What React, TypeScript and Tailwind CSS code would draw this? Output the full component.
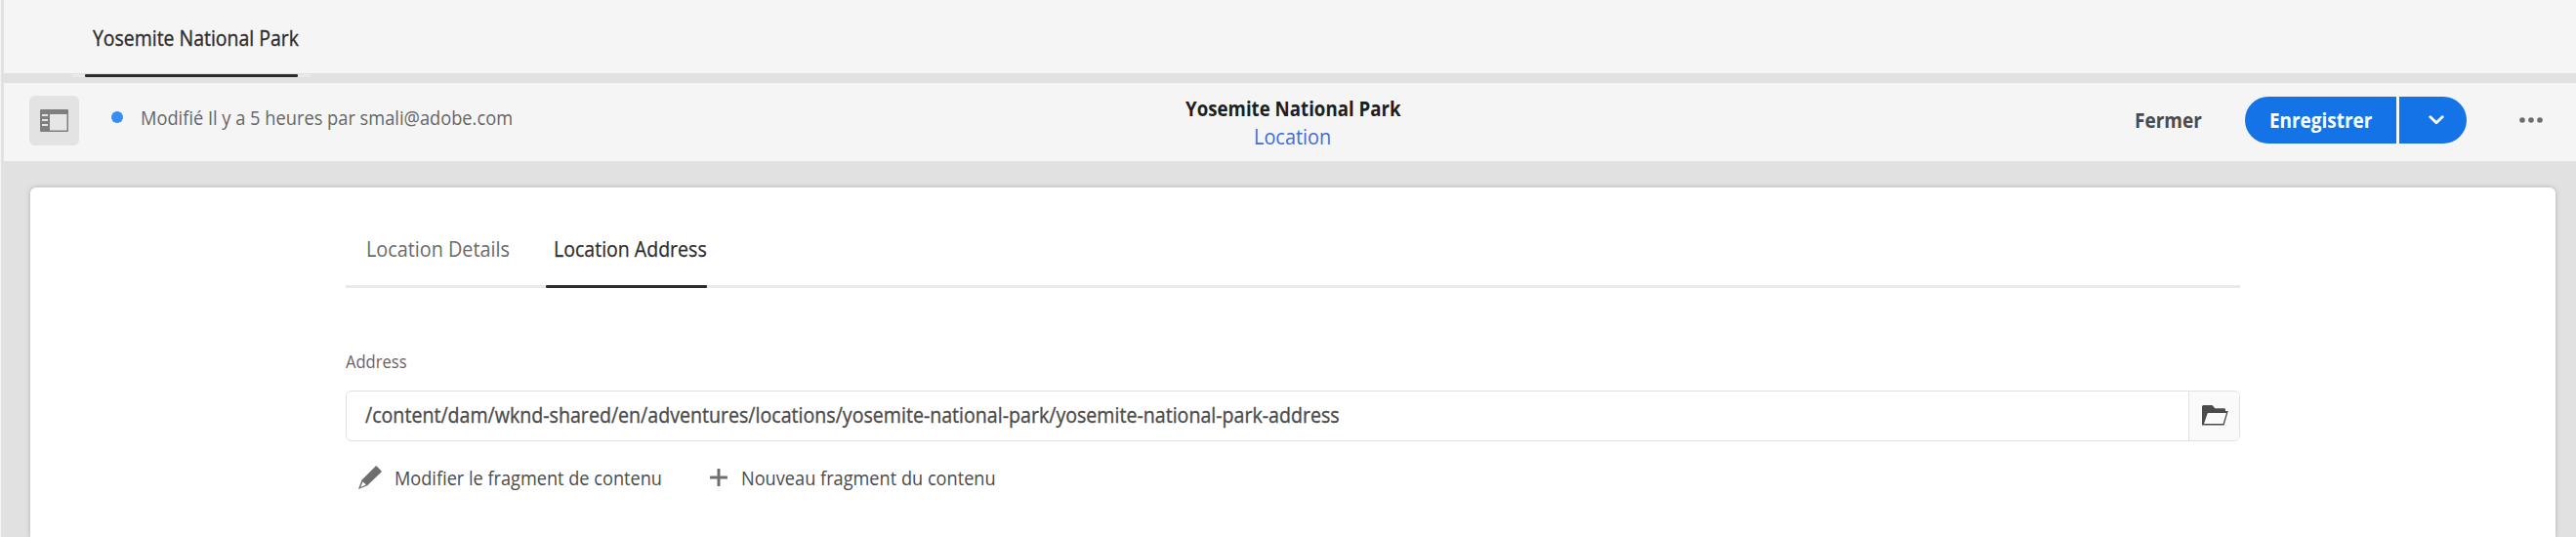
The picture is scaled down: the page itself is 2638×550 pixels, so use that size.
import type { ReactNode } from "react";

function Label({ box, text, children }: { box: string; text: string; children: ReactNode }) {
  return (
    <span className={`block shrink-0 whitespace-nowrap ${box}`}>
      <span className={`inline-block origin-left ${text}`}>{children}</span>
    </span>
  );
}

function RailIcon() {
  return (
    <svg width="29" height="23" viewBox="0 0 29 23" className="block">
      <rect x="0" y="0" width="29" height="23" rx="1" fill="#7f7f7f" />
      <rect x="10" y="5" width="17.5" height="16.5" fill="#e6e6e6" />
      <path d="M2 6h6M2 11h6M2 16h6" stroke="#e3e3e3" strokeWidth="1.8" />
    </svg>
  );
}

function FolderIcon() {
  return (
    <svg width="27" height="21" viewBox="0 0 27 21" className="block">
      <path d="M0 20.5V1.5Q0 0 1.5 0H10.5L13.3 3.2H23Q24 3.2 24 4.2V6H26.8L22.6 20.5Z" fill="#4b4b4b" />
      <path d="M5.8 8H25L21.6 19H2Z" fill="#fafafa" />
    </svg>
  );
}

function PencilIcon() {
  return (
    <svg width="24" height="24" viewBox="0 0 24 24" className="block">
      <path d="M17.6 0.5Q18.2 0 18.8 0.5L23.5 5.2Q24 5.8 23.5 6.4L9.2 20.3L0.8 23.8Q0 24 0.2 23.2L3.6 14.6Z" fill="#6e6e6e" />
      <path d="M4.6 16.3L7.8 19.6L2.2 22Z" fill="#fff" />
    </svg>
  );
}

function PlusIcon() {
  return (
    <svg width="18" height="18" viewBox="0 0 18 18" className="block">
      <path d="M9 1V17M1 9H17" stroke="#6e6e6e" strokeWidth="3" strokeLinecap="round" />
    </svg>
  );
}

function ChevronIcon() {
  return (
    <svg width="16" height="10" viewBox="0 0 16 10" className="block">
      <path d="M1.8 1.8L8 7.8L14.2 1.8" fill="none" stroke="#fff" strokeWidth="2.8" strokeLinecap="round" strokeLinejoin="round" />
    </svg>
  );
}

function MoreIcon() {
  return (
    <svg width="24" height="6" viewBox="0 0 24 6" className="block">
      <circle cx="3" cy="3" r="2.8" fill="#6e6e6e" />
      <circle cx="12" cy="3" r="2.8" fill="#6e6e6e" />
      <circle cx="21" cy="3" r="2.8" fill="#6e6e6e" />
    </svg>
  );
}

function FragmentTabs() {
  return (
    <header className="flex h-[85px] flex-col">
      <div className="h-[75px] bg-[#f5f5f5] pl-[91px] pt-[23px]">
        <Label box="w-[211px]" text="text-[22px] leading-[30px] text-[#2c2c2c] [-webkit-text-stroke:0.35px] scale-x-[0.884]">
          Yosemite National Park
        </Label>
      </div>
      <div className="ml-[70px] mt-px flex h-[3px] w-[244px] bg-[#eaeaea] pl-[13px]">
        <div className="w-[218px] rounded-[1px] bg-[#2c2c2c]" />
      </div>
    </header>
  );
}

function Toolbar() {
  return (
    <div className="grid h-[80px] grid-cols-[1fr_240px_1fr] bg-[#f5f5f5]">
      <div className="flex pl-[26px] pt-[13px]">
        <button className="flex h-[51px] w-[51px] shrink-0 items-center justify-center rounded-[6px] bg-[#e3e3e3]">
          <RailIcon />
        </button>
        <span className="ml-[33px] mt-[16px] h-[12px] w-[12px] shrink-0 rounded-full bg-[#378ef0]" />
        <div className="ml-[18px] mt-[8px]">
          <Label box="w-[384px]" text="text-[19.5px] leading-[30px] text-[#666666] scale-x-[0.936]">
            Modifié Il y a 5 heures par smali@adobe.com
          </Label>
        </div>
      </div>
      <div className="flex flex-col items-start pl-[13px] pt-[10px]">
        <Label box="w-[221px]" text="text-[22px] font-bold leading-[30px] text-[#1e1e1e] scale-x-[0.849]">
          Yosemite National Park
        </Label>
        <div className="-mt-px ml-[70px]">
          <Label box="w-[80px]" text="text-[22px] leading-[30px] text-[#3b6fd6] scale-x-[0.905]">
            Location
          </Label>
        </div>
      </div>
      <div className="flex justify-end pt-[14px]">
        <div className="pt-[8px]">
          <Label box="w-[69px]" text="text-[22px] font-bold leading-[30px] text-[#4b4b4b] scale-x-[0.865]">
            Fermer
          </Label>
        </div>
        <button className="ml-[44px] h-[48px] w-[155px] shrink-0 rounded-l-full bg-[#1473e6] pl-[25px] pb-[2px]">
          <Label box="w-[106px] text-left" text="text-[22px] font-bold leading-[30px] text-white scale-x-[0.86]">
            Enregistrer
          </Label>
        </button>
        <button className="ml-[3px] flex h-[48px] w-[69px] shrink-0 items-center rounded-r-full bg-[#1473e6] pl-[30px]">
          <ChevronIcon />
        </button>
        <button className="ml-[54px] mr-[34px] flex h-[48px] items-center">
          <MoreIcon />
        </button>
      </div>
    </div>
  );
}

function FragmentForm() {
  return (
    <main className="ml-[27px] mr-[21px] mt-[27px] flex-1 rounded-t-[6px] bg-white pl-[323px] shadow-[0_0_5px_0_rgba(0,0,0,0.22)]">
      <div className="w-[1940px]">
        <nav className="flex h-[100px] pl-[21px] pt-[47px]">
          <Label box="w-[192px]" text="text-[22px] leading-[30px] text-[#6a6a6a] scale-x-[0.9]">
            Location Details
          </Label>
          <Label box="w-[160px]" text="text-[22px] leading-[30px] text-[#2c2c2c] [-webkit-text-stroke:0.25px] scale-x-[0.888]">
            Location Address
          </Label>
        </nav>
        <div className="flex h-[3px] bg-[#eaeaea] pl-[205px]">
          <div className="w-[165px] rounded-[1px] bg-[#2c2c2c]" />
        </div>
        <div className="mt-[60px] h-[45px]">
          <Label box="w-[64px]" text="text-[18px] leading-[30px] text-[#666666] scale-x-[0.92]">
            Address
          </Label>
        </div>
        <div className="flex h-[52px] rounded-[6px] border border-[#e1e1e1]">
          <div className="flex-1 pl-[19px] pt-[8px]">
            <Label box="w-[1000px]" text="text-[22px] leading-[30px] text-[#4b4b4b] [-webkit-text-stroke:0.35px] scale-x-[0.891]">
              /content/dam/wknd-shared/en/adventures/locations/yosemite-national-park/yosemite-national-park-address
            </Label>
          </div>
          <button className="flex w-[52px] rounded-r-[5px] border-l border-[#e1e1e1] bg-[#fafafa] pl-[13px] pt-[14px]">
            <FolderIcon />
          </button>
        </div>
        <div className="mt-[22px] flex h-[30px] items-center pl-[13px]">
          <PencilIcon />
          <span className="w-[13px]" />
          <Label box="mt-[2px] w-[276px]" text="text-[19.5px] leading-[30px] text-[#4b4b4b] scale-x-[0.931]">
            Modifier le fragment de contenu
          </Label>
          <span className="w-[47px]" />
          <PlusIcon />
          <span className="w-[14px]" />
          <Label box="mt-[2px] w-[264px]" text="text-[19.5px] leading-[30px] text-[#4b4b4b] scale-x-[0.932]">
            Nouveau fragment du contenu
          </Label>
        </div>
      </div>
    </main>
  );
}

export default function App() {
  return (
    <div className="h-[550px] w-[2638px] overflow-hidden bg-[#f5f5f5] pl-px font-['Open_Sans',sans-serif]">
      <div className="h-full bg-[#e1e1e1] pl-[3px]">
        <div className="flex h-full flex-col">
          <FragmentTabs />
          <Toolbar />
          <FragmentForm />
        </div>
      </div>
    </div>
  );
}
